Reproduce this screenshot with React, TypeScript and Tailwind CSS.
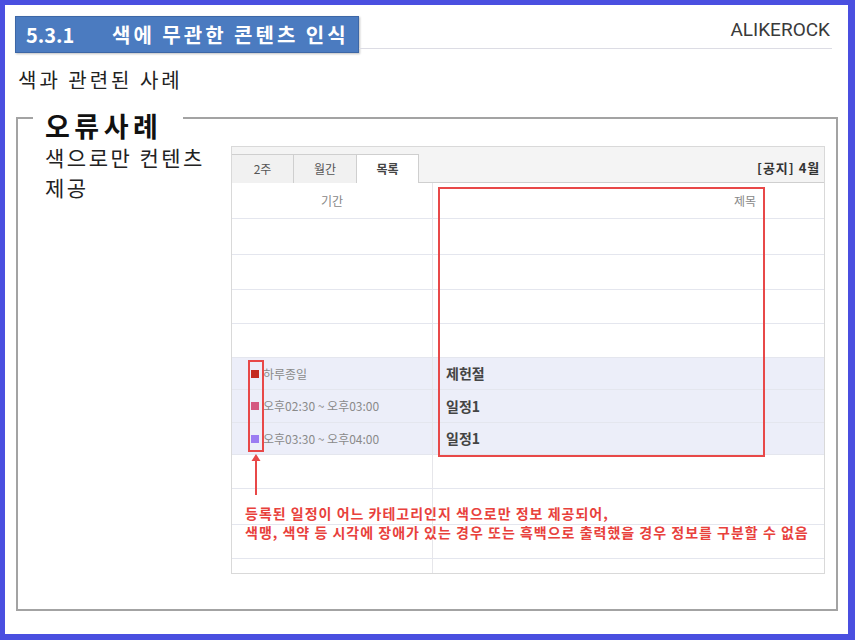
import React from 'react';

interface GridRow {
  h: number;
  color?: string;
  time?: string;
  title?: string;
}

const gridRows: GridRow[] = [
  { h: 36 },
  { h: 35 },
  { h: 34 },
  { h: 34 },
  { h: 32, color: '#c42a1f', time: '하루종일', title: '제헌절' },
  { h: 33, color: '#d45880', time: '오후02:30 ~ 오후03:00', title: '일정1' },
  { h: 32, color: '#9b7cf2', time: '오후03:30 ~ 오후04:00', title: '일정1' },
  { h: 34 },
  { h: 36 },
  { h: 34 },
  { h: 16 },
];

function CalendarCapture() {
  return (
    <div className="relative mt-[5px] h-[428px] w-[594px] shrink-0 overflow-hidden border border-[#d9d9d9] bg-white">
      {/* tab bar */}
      <div className="flex h-[36px] items-end border-b border-[#cfcfcf] bg-[#f4f4f4]">
        <div className="-mb-px flex h-[29px] w-[62px] shrink-0 items-center justify-center border-r border-t border-[#cfcfcf] bg-[#f1f1f1] text-[12px] text-[#555]">
          2주
        </div>
        <div className="-mb-px flex h-[29px] w-[63px] shrink-0 items-center justify-center border-r border-t border-[#cfcfcf] bg-[#f1f1f1] text-[12px] text-[#555]">
          월간
        </div>
        <div className="-mb-px flex h-[29px] w-[62px] shrink-0 items-center justify-center border-r border-t border-[#cfcfcf] bg-white text-[12px] font-bold text-[#444]">
          목록
        </div>
        <div className="ml-[338px] flex h-[29px] shrink-0 items-center whitespace-nowrap text-[13px] font-bold tracking-[1px] text-[#333]">
          [공지] 4월
        </div>
      </div>

      {/* column header */}
      <div className="flex h-[35px] text-[12px] text-[#888]">
        <div className="flex w-[201px] items-center justify-center border-r border-[#e6e6ea]">기간</div>
        <div className="flex flex-1 items-center pl-[301px]">제목</div>
      </div>

      {gridRows.map((r, i) => (
        <div
          key={i}
          className={`flex border-t border-[#e4e6ee] ${r.color ? 'bg-[#eceef9]' : 'bg-white'}`}
          style={{ height: r.h }}
        >
          <div className="flex w-[201px] items-center gap-[4px] border-r border-[#e6e6ea] pl-[19px] text-[12px] text-[#8a8a8a]">
            {r.color && <span className="h-[8px] w-[8px] shrink-0" style={{ background: r.color }} />}
            {r.time}
          </div>
          <div className="flex flex-1 items-center pl-[13px] text-[14px] font-bold text-[#444]">{r.title}</div>
        </div>
      ))}

      {/* annotations */}
      <div className="absolute left-[16px] top-[213px] h-[92px] w-[16px] border-2 border-[#e84848]" />
      <div className="absolute left-[206px] top-[40px] h-[270px] w-[327px] border-2 border-[#e84848]" />
      <svg className="absolute left-[18px] top-[305px]" width="12" height="44" viewBox="0 0 12 44">
        <path d="M6 2 L1.5 9 L10.5 9 Z" fill="#e84848" />
        <line x1="6" y1="8" x2="6" y2="43" stroke="#e84848" strokeWidth="2" />
      </svg>
      <div className="absolute left-[13px] top-[357px] whitespace-nowrap text-[14px] font-bold leading-[19px] tracking-[1px] text-[#e8413c]">
        <div>등록된 일정이 어느 카테고리인지 색으로만 정보 제공되어,</div>
        <div>색맹, 색약 등 시각에 장애가 있는 경우 또는 흑백으로 출력했을 경우 정보를 구분할 수 없음</div>
      </div>
    </div>
  );
}

export default function App() {
  return (
    <div className="h-[640px] w-[855px] bg-[#4a4fe0] pb-[6px] pl-[5px] pr-[7px] pt-[5px] font-['Noto_Sans_CJK_KR',sans-serif]">
      <div className="flex h-full flex-col bg-white">
        {/* slide header */}
        <div className="ml-[10px] mt-[11px] flex items-start">
          <div className="flex h-[37px] w-[344px] shrink-0 items-center border border-[#3d67a6] bg-[#4b7bc0] pl-[10px] text-[20px] font-bold text-white shadow-[1px_1px_2px_rgba(0,0,0,0.25)]">
            <span className="w-[86px]">5.3.1</span>
            <span className="tracking-[3px]">색에 무관한 콘텐츠 인식</span>
          </div>
          <div className="mr-[16px] flex h-[33px] flex-1 justify-end border-b border-[#dcdce4] pr-[2px] pt-[2px] font-['Roboto',sans-serif] text-[19px] leading-[24px] text-[#3a3a3a]">
            ALIKEROCK
          </div>
        </div>

        <p className="ml-[13px] mt-[13px] text-[20px] leading-[28px] tracking-[3px] text-[#222]">색과 관련된 사례</p>

        {/* example box */}
        <div className="ml-[11px] mr-[10px] mt-[23px] flex flex-col">
          <div className="flex">
            <div className="w-[17px] self-stretch border-l-2 border-t-2 border-[#a3a3a3]" />
            <span className="-mt-[6px] pl-[12px] pr-[21px] text-[27px] font-bold leading-[30px] tracking-[4.5px] text-[#111]">
              오류사례
            </span>
            <div className="flex-1 self-stretch border-r-2 border-t-2 border-[#a3a3a3]" />
          </div>
          <div className="flex h-[470px] border-b-2 border-l-2 border-r-2 border-[#a3a3a3]">
            <p className="w-[213px] shrink-0 pl-[27px] pt-[1px] text-[21px] leading-[30px] tracking-[2.5px] text-[#222]">
              색으로만 컨텐츠
              <br />
              제공
            </p>
            <CalendarCapture />
          </div>
        </div>
      </div>
    </div>
  );
}
